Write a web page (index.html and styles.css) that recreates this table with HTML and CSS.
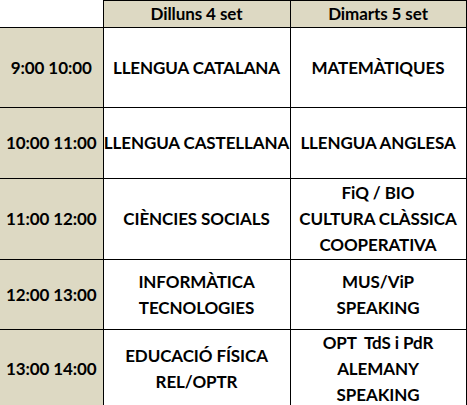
FILE: index.html
```html
<!DOCTYPE html>
<html lang="ca">
<head>
<meta charset="utf-8">
<title>Horari</title>
<link rel="stylesheet" href="styles.css">
</head>
<body>
<table class="schedule">
  <colgroup>
    <col class="c-time">
    <col class="c-day1">
    <col class="c-day2">
  </colgroup>
  <thead>
    <tr class="r-head">
      <th class="corner"></th>
      <th class="day">Dilluns 4 set</th>
      <th class="day">Dimarts 5 set</th>
    </tr>
  </thead>
  <tbody>
    <tr class="r1">
      <th class="time">9:00 10:00</th>
      <td>LLENGUA CATALANA</td>
      <td>MATEMÀTIQUES</td>
    </tr>
    <tr class="r2">
      <th class="time">10:00 11:00</th>
      <td>LLENGUA CASTELLANA</td>
      <td>LLENGUA ANGLESA</td>
    </tr>
    <tr class="r3">
      <th class="time">11:00 12:00</th>
      <td>CIÈNCIES SOCIALS</td>
      <td>FiQ / BIO<br>CULTURA CLÀSSICA<br>COOPERATIVA</td>
    </tr>
    <tr class="r4">
      <th class="time">12:00 13:00</th>
      <td>INFORMÀTICA<br>TECNOLOGIES</td>
      <td>MUS/ViP<br>SPEAKING</td>
    </tr>
    <tr class="r5">
      <th class="time">13:00 14:00</th>
      <td>EDUCACIÓ FÍSICA<br>REL/OPTR</td>
      <td>OPT&nbsp; TdS i PdR<br>ALEMANY<br>SPEAKING</td>
    </tr>
  </tbody>
</table>
</body>
</html>
```

FILE: styles.css
```css
html, body {
  margin: 0;
  padding: 0;
  background: #ffffff;
}

.schedule {
  border-collapse: collapse;
  table-layout: fixed;
  width: 466px;
  font-family: Lato, "Open Sans", sans-serif;
  font-weight: bold;
  font-size: 17px;
  line-height: 26px;
  letter-spacing: -0.1px;
  color: #000000;
}

.c-time { width: 103px; }
.c-day1 { width: 187px; }
.c-day2 { width: 176px; }

.schedule th,
.schedule td {
  border: 1px solid #000000;
  padding: 0;
  text-align: center;
  vertical-align: middle;
  font-weight: bold;
  white-space: nowrap;
}

.corner {
  border-top: none !important;
  border-left: none !important;
  background: #ffffff;
}

.day,
.time {
  background: #ddd9c3;
}

.schedule .time {
  border-left: none;
}

.r-head { height: 27px; }
.r-head th { line-height: 24px; }
.r1 { height: 80px; }
.r2 { height: 71px; }
.r3 { height: 81px; }
.r4 { height: 70px; }
.r5 { height: 71px; }
```
